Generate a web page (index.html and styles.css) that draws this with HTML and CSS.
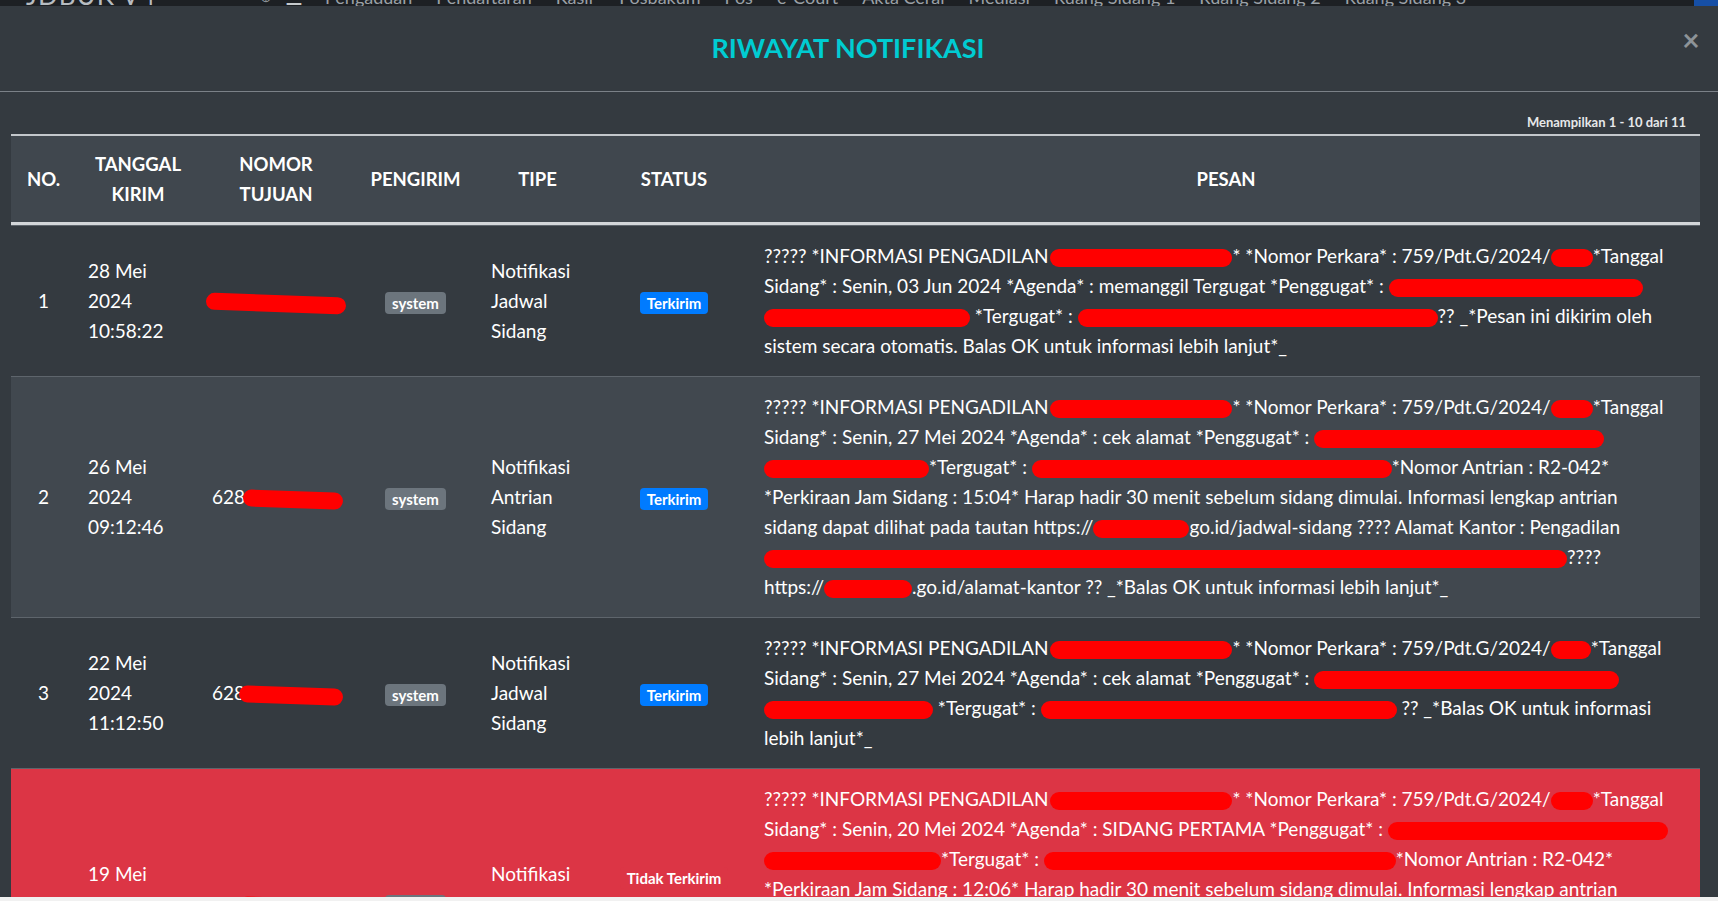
FILE: index.html
```html
<!DOCTYPE html>
<html lang="id">
<head>
<meta charset="utf-8">
<title>Riwayat Notifikasi</title>
<link rel="stylesheet" href="styles.css">
</head>
<body>
<div class="app">
  <nav class="topbar">
    <span class="brand">JDBUK V4</span>
    <span class="nav-icon">⊕</span>
    <span class="burger">☰</span>
    <ul class="menu">
      <li>Pengaduan</li>
      <li>Pendaftaran</li>
      <li>Kasir</li>
      <li>Posbakum</li>
      <li>Pos</li>
      <li>e-Court</li>
      <li>Akta Cerai</li>
      <li>Mediasi</li>
      <li>Ruang Sidang 1</li>
      <li>Ruang Sidang 2</li>
      <li>Ruang Sidang 3</li>
    </ul>
    <span class="topbar-btn"></span>
  </nav>

  <div class="modal">
    <div class="modal-header">
      <h4 class="modal-title">RIWAYAT NOTIFIKASI</h4>
      <button class="close" type="button">×</button>
    </div>
    <div class="modal-body">
      <div class="info">Menampilkan 1 - 10 dari 11</div>
      <table class="notif-table">
        <colgroup>
          <col class="c-no">
          <col class="c-date">
          <col class="c-phone">
          <col class="c-sender">
          <col class="c-type">
          <col class="c-status">
          <col class="c-msg">
        </colgroup>
        <thead>
          <tr>
            <th>NO.</th>
            <th>TANGGAL KIRIM</th>
            <th>NOMOR TUJUAN</th>
            <th>PENGIRIM</th>
            <th>TIPE</th>
            <th>STATUS</th>
            <th>PESAN</th>
          </tr>
        </thead>
        <tbody>
          <tr>
            <td class="center">1</td>
            <td>28 Mei<br>2024<br>10:58:22</td>
            <td class="phone-cell"><span class="redact phone p1"></span></td>
            <td class="center"><span class="badge badge-secondary">system</span></td>
            <td>Notifikasi Jadwal Sidang</td>
            <td class="center"><span class="badge badge-primary">Terkirim</span></td>
            <td class="msg">????? *INFORMASI PENGADILAN<span class="redact r182"></span>* *Nomor Perkara* : 759/Pdt.G/2024/<span class="redact r42"></span>*Tanggal<br>Sidang* : Senin, 03 Jun 2024 *Agenda* : memanggil Tergugat *Penggugat* : <span class="redact r254"></span><br><span class="redact r206"></span> *Tergugat* : <span class="redact r360"></span>?? _*Pesan ini dikirim oleh<br>sistem secara otomatis. Balas OK untuk informasi lebih lanjut*_</td>
          </tr>
          <tr>
            <td class="center">2</td>
            <td>26 Mei<br>2024<br>09:12:46</td>
            <td class="phone-cell">628<span class="redact phone p2"></span></td>
            <td class="center"><span class="badge badge-secondary">system</span></td>
            <td>Notifikasi Antrian Sidang</td>
            <td class="center"><span class="badge badge-primary">Terkirim</span></td>
            <td class="msg">????? *INFORMASI PENGADILAN<span class="redact r182"></span>* *Nomor Perkara* : 759/Pdt.G/2024/<span class="redact r42"></span>*Tanggal<br>Sidang* : Senin, 27 Mei 2024 *Agenda* : cek alamat *Penggugat* : <span class="redact r290"></span><br><span class="redact r165"></span>*Tergugat* : <span class="redact r360"></span>*Nomor Antrian : R2-042*<br>*Perkiraan Jam Sidang : 15:04* Harap hadir 30 menit sebelum sidang dimulai. Informasi lengkap antrian<br>sidang dapat dilihat pada tautan https://<span class="redact r96"></span>go.id/jadwal-sidang ???? Alamat Kantor : Pengadilan<br><span class="redact r803"></span>????<br>https://<span class="redact r88"></span>.go.id/alamat-kantor ?? _*Balas OK untuk informasi lebih lanjut*_</td>
          </tr>
          <tr>
            <td class="center">3</td>
            <td>22 Mei<br>2024<br>11:12:50</td>
            <td class="phone-cell">628<span class="redact phone p3"></span></td>
            <td class="center"><span class="badge badge-secondary">system</span></td>
            <td>Notifikasi Jadwal Sidang</td>
            <td class="center"><span class="badge badge-primary">Terkirim</span></td>
            <td class="msg">????? *INFORMASI PENGADILAN<span class="redact r182"></span>* *Nomor Perkara* : 759/Pdt.G/2024/<span class="redact r40"></span>*Tanggal<br>Sidang* : Senin, 27 Mei 2024 *Agenda* : cek alamat *Penggugat* : <span class="redact r305"></span><br><span class="redact r169"></span> *Tergugat* : <span class="redact r356"></span> ?? _*Balas OK untuk informasi<br>lebih lanjut*_</td>
          </tr>
          <tr class="row-danger">
            <td class="center">4</td>
            <td>19 Mei<br>2024<br>14:21:07</td>
            <td class="phone-cell">628<span class="redact phone p3"></span></td>
            <td class="center"><span class="badge badge-secondary">system</span></td>
            <td>Notifikasi Antrian Sidang</td>
            <td class="center">
              <span class="badge badge-danger">Tidak Terkirim</span>
              <div class="error-note">Nomor tidak terdaftar</div>
            </td>
            <td class="msg">????? *INFORMASI PENGADILAN<span class="redact r182"></span>* *Nomor Perkara* : 759/Pdt.G/2024/<span class="redact r42"></span>*Tanggal<br>Sidang* : Senin, 20 Mei 2024 *Agenda* : SIDANG PERTAMA *Penggugat* : <span class="redact r280"></span><br><span class="redact r177"></span>*Tergugat* : <span class="redact r352"></span>*Nomor Antrian : R2-042*<br>*Perkiraan Jam Sidang : 12:06* Harap hadir 30 menit sebelum sidang dimulai. Informasi lengkap antrian<br>sidang dapat dilihat pada tautan https://<span class="redact r96"></span>go.id/jadwal-sidang ???? Alamat Kantor : Pengadilan<br><span class="redact r803"></span>????<br>https://<span class="redact r88"></span>.go.id/alamat-kantor ?? _*Pesan ini dikirim oleh sistem secara otomatis.<br>Balas OK untuk informasi lebih lanjut*_</td>
          </tr>
        </tbody>
      </table>
    </div>
  </div>

  <div class="hscroll"></div>
</div>
</body>
</html>
```

FILE: styles.css
```css
* { box-sizing: border-box; }

html, body { height: 100%; }

body {
  margin: 0;
  font-family: Lato, "Liberation Sans", sans-serif;
  background: #343a40;
  color: #fff;
}

.app {
  height: 100vh;
  display: flex;
  flex-direction: column;
  overflow: hidden;
}

/* ---------- top navbar (mostly hidden under the modal) ---------- */
.topbar {
  flex: none;
  height: 6px;
  background: #1d2024;
  color: #9ba1a7;
  display: flex;
  align-items: flex-end;
  overflow: hidden;
  padding-left: 26px;
  font-size: 18px;
  line-height: 18px;
}
.brand {
  width: 234px;
  font-size: 26px;
  line-height: 22px;
  color: #b7bcc1;
  letter-spacing: 1px;
}
.nav-icon { width: 25px; font-size: 14px; }
.burger { width: 40px; font-size: 20px; color: #c6cacd; }
.menu {
  display: flex;
  gap: 24px;
  list-style: none;
  margin: 0;
  padding: 0;
}
.topbar-btn {
  margin-left: auto;
  width: 24px;
  height: 6px;
  background: #164fa6;
}

/* ---------- modal ---------- */
.modal {
  flex: 1;
  min-height: 0;
  overflow: hidden;
  background: #343a40;
  display: flex;
  flex-direction: column;
}
.modal-header {
  flex: none;
  display: flex;
  align-items: flex-start;
  padding: 26px 16px 27px 16px;
  border-bottom: 1px solid #7b8188;
}
.modal-title {
  flex: 1;
  margin: 0;
  text-align: center;
  font-size: 27px;
  line-height: 32px;
  font-weight: 700;
  color: #00ccd2;
}
.close {
  width: 22px;
  margin-top: -8px;
  padding: 0;
  border: 0;
  background: none;
  font-family: Lato, "Liberation Sans", sans-serif;
  font-size: 30px;
  line-height: 30px;
  font-weight: 700;
  color: #8d9398;
  text-align: center;
}

.modal-body {
  flex: 1;
  min-height: 0;
  padding: 20px 18px 0 11px;
}
.info {
  text-align: right;
  font-size: 13px;
  line-height: 20px;
  font-weight: 700;
  color: #e6e8ea;
  margin: 0 14px 2px 0;
}

/* ---------- table ---------- */
.notif-table {
  width: 100%;
  table-layout: fixed;
  border-collapse: separate;
  border-spacing: 0;
  font-size: 19px;
  line-height: 30px;
}
.c-no { width: 65px; }
.c-date { width: 124px; }
.c-phone { width: 152px; }
.c-sender { width: 127px; }
.c-type { width: 117px; }
.c-status { width: 156px; }

.notif-table th {
  background: #40474e;
  border-top: 2px solid #c3c7cb;
  border-bottom: 3px solid #d3d6d9;
  padding: 13px 12px;
  font-weight: 700;
  font-size: 18.5px;
  text-align: center;
  vertical-align: middle;
  color: #fff;
}
.notif-table td {
  border-top: 1px solid #5e656c;
  padding: 15px 12px;
  vertical-align: middle;
  text-align: left;
}
.notif-table td.center { text-align: center; }
.notif-table td.msg,
.notif-table td.phone-cell { white-space: nowrap; }

.notif-table tbody tr:nth-child(even) { background: #41484f; }
.notif-table tbody tr.row-danger { background: #dc3545; }

.error-note {
  margin-top: 4px;
  font-size: 14px;
  line-height: 26px;
  color: #fff;
}

/* ---------- badges ---------- */
.badge {
  display: inline-block;
  padding: 0 7px;
  height: 22px;
  line-height: 22px;
  border-radius: 4px;
  font-size: 15px;
  font-weight: 700;
  color: #fff;
  vertical-align: middle;
}
.badge-secondary { background: #6c757d; }
.badge-primary { background: #007bff; }
.badge-danger { background: #dc3545; }

/* ---------- redaction marks ---------- */
.redact {
  display: inline-block;
  height: 18px;
  border-radius: 9px;
  background: #ff0000;
  vertical-align: middle;
}
.phone { height: 17px; transform: rotate(2deg); }
.p1 { width: 140px; margin-left: -6px; }
.p2 { width: 100px; margin-left: -2px; }
.p3 { width: 104px; margin-left: -6px; }

.r40 { width: 40px; }
.r42 { width: 42px; }
.r88 { width: 88px; }
.r96 { width: 96px; }
.r165 { width: 165px; }
.r169 { width: 169px; }
.r177 { width: 177px; }
.r182 { width: 182px; margin-left: 2px; }
.r206 { width: 206px; }
.r254 { width: 254px; }
.r280 { width: 280px; }
.r290 { width: 290px; }
.r305 { width: 305px; }
.r352 { width: 352px; }
.r356 { width: 356px; }
.r360 { width: 360px; }
.r803 { width: 803px; }

.hscroll {
  flex: none;
  height: 4px;
  background: #f1f1f1;
}
```
